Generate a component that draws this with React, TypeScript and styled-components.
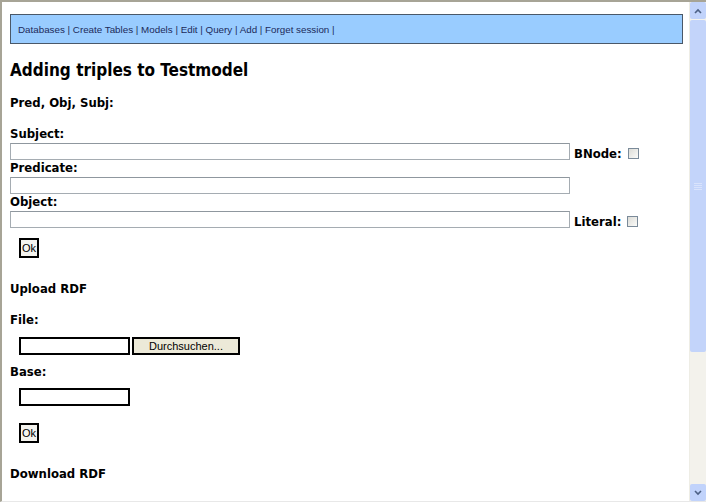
import React from "react";
import styled, { createGlobalStyle } from "styled-components";

const Global = createGlobalStyle`
  html, body { margin: 0; padding: 0; background: #fff; }
  body { width: 706px; height: 502px; overflow: hidden; }
`;

const Frame = styled.div`
  width: 706px;
  height: 502px;
  box-sizing: border-box;
  display: flex;
  border-top: 2px solid #a7a496;
  border-left: 2px solid #a7a496;
  border-bottom: 1px solid #e8e8e8;
  background: #fff;
  overflow: hidden;
`;

const Content = styled.div`
  flex: 1;
  min-width: 0;
  padding: 12px 6px 0 8px;
  box-sizing: border-box;
  font-family: "DejaVu Sans Condensed", "DejaVu Sans", Verdana, sans-serif;
  color: #000;
`;

const NavBar = styled.div`
  height: 30px;
  box-sizing: border-box;
  background: #99ccff;
  border: 1px solid #4a5868;
  display: flex;
  align-items: center;
  padding: 0 0 0 7px;
  font-family: "Liberation Sans", Tahoma, sans-serif;
  font-size: 9.8px;
  color: #1c2a5a;
`;

const Title = styled.h1`
  margin: 16px 0 0 0;
  font-size: 17px;
  font-weight: bold;
  line-height: 20px;
`;

const Label = styled.div<{ $top?: number }>`
  margin-top: ${(p) => p.$top ?? 0}px;
  font-size: 13px;
  font-weight: bold;
  line-height: 15px;
`;

const FieldRow = styled.div`
  display: flex;
  align-items: center;
  margin-top: 2px;
  height: 17px;
`;

const WideInput = styled.input`
  width: 560px;
  height: 17px;
  box-sizing: border-box;
  margin: 0;
  border: 1px solid #a5acb2;
  border-top-color: #8f979e;
  padding: 0;
  background: #fff;
`;

const SideLabel = styled.span`
  margin-left: 4px;
  font-size: 13px;
  font-weight: bold;
  line-height: 15px;
  padding-top: 3px;
`;

const Check = styled.span`
  display: inline-block;
  width: 9px;
  height: 9px;
  margin: 4px 0 0 6px;
  border: 1px solid #7a8a99;
  background: linear-gradient(135deg, #dcdcd7, #fbfbf9);
`;

const Indent = styled.div<{ $top?: number }>`
  display: flex;
  align-items: center;
  margin-left: 9px;
  margin-top: ${(p) => p.$top ?? 0}px;
`;

const OkButton = styled.button`
  width: 20px;
  height: 20px;
  box-sizing: border-box;
  margin: 0;
  padding: 0;
  border: 2px solid #000;
  background: #f4f3ee;
  font-family: "Liberation Sans", Arial, sans-serif;
  font-size: 11px;
  color: #000;
  display: flex;
  align-items: center;
  justify-content: center;
`;

const SmallInput = styled.input`
  width: 111px;
  height: 18px;
  box-sizing: border-box;
  margin: 0;
  padding: 0;
  border: 2px solid #000;
  background: #fff;
`;

const BrowseButton = styled.button`
  width: 108px;
  height: 18px;
  box-sizing: border-box;
  margin: 0 0 0 2px;
  padding: 0;
  border: 2px solid #000;
  background: #ece9d8;
  font-family: "Liberation Sans", Arial, sans-serif;
  font-size: 11px;
  color: #000;
`;

const Section = styled.div<{ $top: number }>`
  margin-top: ${(p) => p.$top}px;
  font-size: 13px;
  font-weight: bold;
  line-height: 16px;
`;

const Scrollbar = styled.div`
  width: 17px;
  display: flex;
  flex-direction: column;
  background: #f3f2ec;
  border-left: 1px solid #eeede5;
  box-sizing: border-box;
`;

const ArrowBtn = styled.div`
  height: 17px;
  display: flex;
  align-items: center;
  justify-content: center;
  background: #c1d3fb;
  border-radius: 2px;
  color: #4d6185;
`;

const Thumb = styled.div`
  height: 332px;
  margin-top: 1px;
  background: #c3d4fa;
  border-radius: 2px;
  display: flex;
  align-items: center;
  justify-content: center;
`;

const Track = styled.div`
  flex: 1;
`;

const Grip = styled.svg`
  display: block;
`;

export default function App() {
  return (
    <>
      <Global />
      <Frame>
        <Content>
          <NavBar>
            Databases | Create Tables | Models | Edit | Query | Add | Forget session |
          </NavBar>
          <Title>Adding triples to Testmodel</Title>
          <Section $top={15}>Pred, Obj, Subj:</Section>
          <Label $top={15}>Subject:</Label>
          <FieldRow>
            <WideInput />
            <SideLabel>BNode:</SideLabel>
            <Check />
          </FieldRow>
          <Label>Predicate:</Label>
          <FieldRow>
            <WideInput />
          </FieldRow>
          <Label>Object:</Label>
          <FieldRow>
            <WideInput />
            <SideLabel>Literal:</SideLabel>
            <Check />
          </FieldRow>
          <Indent $top={10}>
            <OkButton>Ok</OkButton>
          </Indent>
          <Section $top={23}>Upload RDF</Section>
          <Section $top={15}>File:</Section>
          <Indent $top={9}>
            <SmallInput />
            <BrowseButton>Durchsuchen...</BrowseButton>
          </Indent>
          <Section $top={9}>Base:</Section>
          <Indent $top={8}>
            <SmallInput />
          </Indent>
          <Indent $top={17}>
            <OkButton>Ok</OkButton>
          </Indent>
          <Section $top={23}>Download RDF</Section>
        </Content>
        <Scrollbar>
          <ArrowBtn>
            <svg width="8" height="6" viewBox="0 0 8 6">
              <path d="M1 5 L4 2 L7 5" stroke="#4d6185" strokeWidth="1.6" fill="none" />
            </svg>
          </ArrowBtn>
          <Thumb>
            <Grip width="8" height="8" viewBox="0 0 8 8">
              <path d="M0 1.5H8M0 3.5H8M0 5.5H8M0 7.5H8" stroke="#d9e3fc" strokeWidth="1" />
            </Grip>
          </Thumb>
          <Track />
          <ArrowBtn>
            <svg width="8" height="6" viewBox="0 0 8 6">
              <path d="M1 1 L4 4 L7 1" stroke="#4d6185" strokeWidth="1.6" fill="none" />
            </svg>
          </ArrowBtn>
        </Scrollbar>
      </Frame>
    </>
  );
}
